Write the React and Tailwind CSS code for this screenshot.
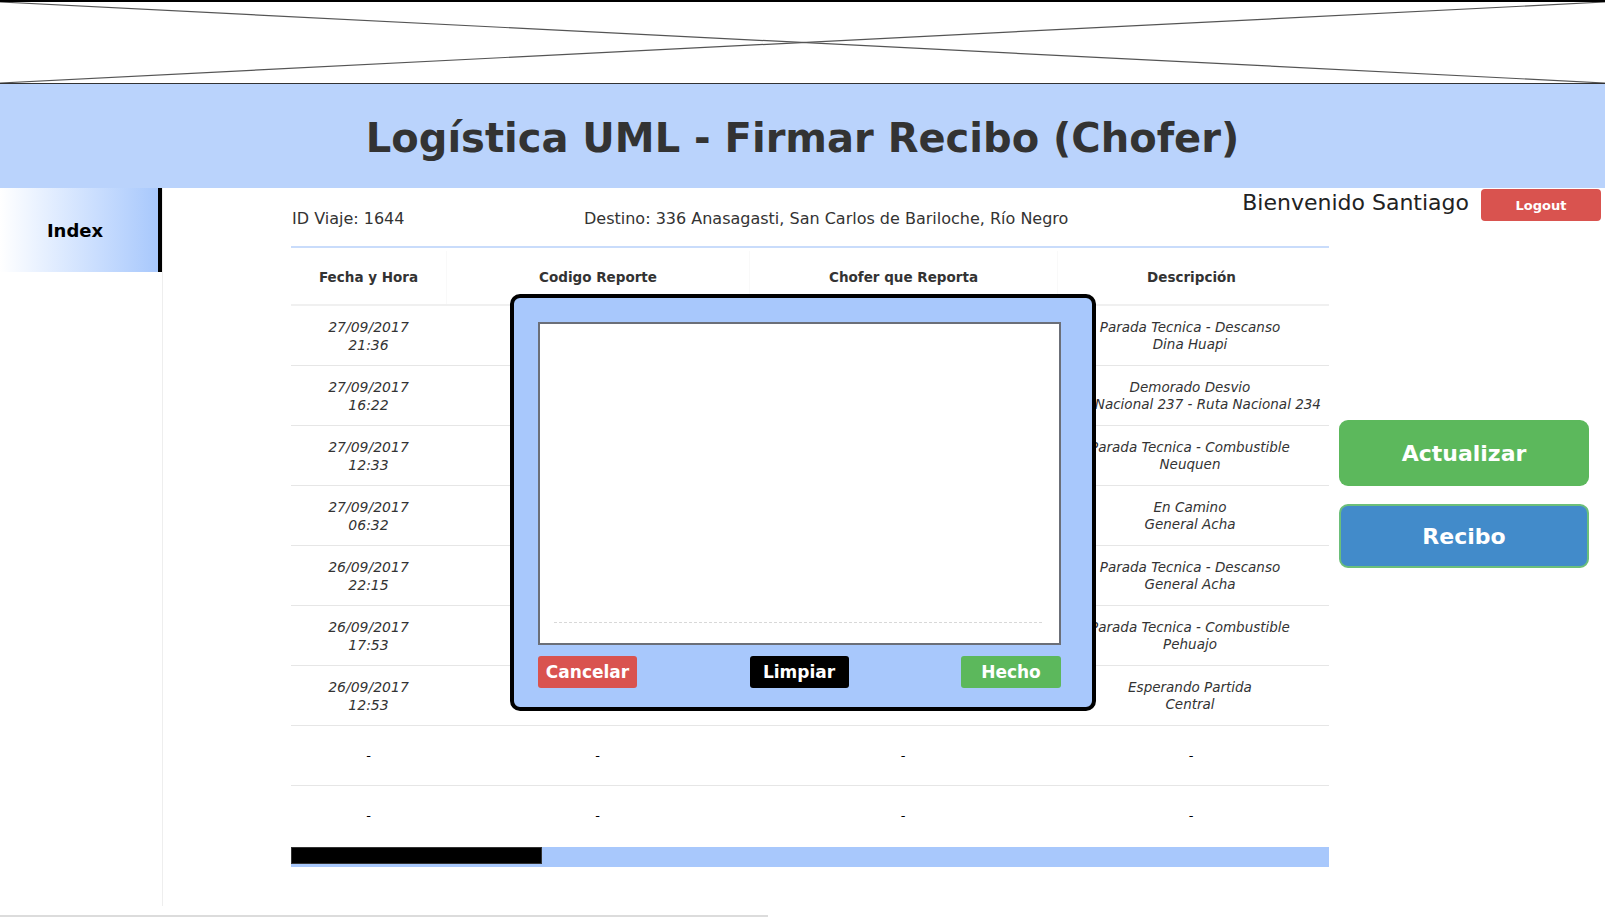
import React from "react";

const rows = [
  ["27/09/2017", "21:36", "Parada Tecnica - Descanso", "Dina Huapi"],
  ["27/09/2017", "16:22", "Demorado Desvio", "Ruta Nacional 237 - Ruta Nacional 234"],
  ["27/09/2017", "12:33", "Parada Tecnica - Combustible", "Neuquen"],
  ["27/09/2017", "06:32", "En Camino", "General Acha"],
  ["26/09/2017", "22:15", "Parada Tecnica - Descanso", "General Acha"],
  ["26/09/2017", "17:53", "Parada Tecnica - Combustible", "Pehuajo"],
  ["26/09/2017", "12:53", "Esperando Partida", "Central"],
];

const font = { fontFamily: '"DejaVu Sans", Verdana, sans-serif' };

export default function App() {
  return (
    <div className="relative w-[1605px] h-[917px] overflow-hidden bg-white text-[#333]" style={font}>
      {/* image placeholder */}
      <div className="h-[84px] border-t-2 border-b border-t-black border-b-[#333] relative">
        <svg className="w-full h-full block" viewBox="0 0 1605 81" preserveAspectRatio="none">
          <line x1="0" y1="0" x2="1605" y2="81" stroke="#555" strokeWidth="1.2" />
          <line x1="0" y1="81" x2="1605" y2="0" stroke="#555" strokeWidth="1.2" />
        </svg>
      </div>

      {/* header */}
      <div className="h-[104px] bg-[#bad3fc] flex items-center justify-center pt-[4px]">
        <h1 className="text-[40px] font-bold leading-none text-[#333] tracking-normal">
          Logística UML - Firmar Recibo (Chofer)
        </h1>
      </div>

      {/* body */}
      <div className="flex h-[718px]">
        <aside className="w-[163px] border-r border-[#eeeeee] shrink-0">
          <div className="w-[162px] h-[84px] border-r-4 border-black bg-gradient-to-r from-white to-[#a8c8fc] flex items-center justify-center pr-2 pt-[1px]">
            <span className="text-[18px] font-bold text-black">Index</span>
          </div>
        </aside>

        <main className="flex-1 flex flex-col">
          {/* top info row */}
          <div className="h-[58px] flex items-start">
            <div className="pl-[129px] w-[421px] pt-[21px] text-[16px] leading-5 text-[#333]">ID Viaje: 1644</div>
            <div className="pt-[21px] text-[16px] leading-5 text-[#333]">
              Destino: 336 Anasagasti, San Carlos de Bariloche, Río Negro
            </div>
            <div className="ml-auto flex items-start pr-[4px]">
              <span className="text-[22px] leading-[26px] mt-[2px] text-[#222] mr-[12px]">Bienvenido Santiago</span>
              <button className="w-[120px] h-[32px] mt-[1px] rounded-[4px] bg-[#d9534f] text-white text-[13px] font-bold pt-[2px]">
                Logout
              </button>
            </div>
          </div>

          <div className="flex">
            {/* table */}
            <div className="ml-[128px] w-[1038px]">
              <div className="border-t-2 border-[#c9dcfb]">
                <div className="flex h-[58px] border-b-2 border-[#f0f0f0] text-[13.5px] font-bold text-[#333] items-center pt-[3px]">
                  <div className="w-[155px] text-center">Fecha y Hora</div>
                  <div className="w-[303px] h-full flex items-center justify-center border-l border-[#f9f9f9]">Codigo Reporte</div>
                  <div className="w-[308px] h-full flex items-center justify-center border-l border-[#f9f9f9]">Chofer que Reporta</div>
                  <div className="w-[272px] h-full flex items-center justify-center border-l border-[#f9f9f9] pr-[4px]">Descripción</div>
                </div>
                {rows.map((r, i) => (
                  <div key={i} className="flex h-[60px] border-b border-[#e6e6e6] items-center italic text-[#333]">
                    <div className="w-[155px] text-center text-[14px] leading-[18px]">
                      <div>{r[0]}</div>
                      <div>{r[1]}</div>
                    </div>
                    <div className="w-[303px]" />
                    <div className="w-[308px]" />
                    <div className="w-[272px] flex flex-col items-center whitespace-nowrap text-[13.5px] leading-[17px] pr-[6px]">
                      <div>{r[2]}</div>
                      <div>{r[3]}</div>
                    </div>
                  </div>
                ))}
                {[0, 1].map((i) => (
                  <div key={"d" + i} className={`flex h-[60px] items-center text-[13px] text-black ${i === 0 ? "border-b border-[#e6e6e6]" : ""}`}>
                    <div className="w-[155px] text-center">-</div>
                    <div className="w-[303px] text-center">-</div>
                    <div className="w-[308px] text-center">-</div>
                    <div className="w-[272px] text-center pr-[4px]">-</div>
                  </div>
                ))}
              </div>
              {/* scrollbar */}
              <div className="h-[20px] bg-[#a8c8fc] mt-[1px] flex items-start">
                <div className="w-[251px] h-[17px] bg-black border border-[#333]" />
              </div>
            </div>

            {/* action buttons */}
            <div className="ml-[10px] w-[250px] pt-[174px] flex flex-col gap-[18px]">
              <button className="h-[66px] rounded-[9px] bg-[#5cb85c] text-white text-[22px] font-bold">
                Actualizar
              </button>
              <button className="h-[64px] rounded-[9px] bg-[#428bca] border-2 border-[#6cbf7a] text-white text-[22px] font-bold">
                Recibo
              </button>
            </div>
          </div>
        </main>
      </div>

      {/* bottom scrollbar line */}
      <div className="absolute left-0 bottom-0 w-[768px] h-[2px] bg-[#dcdcdc]" />

      {/* signature modal */}
      <div className="absolute left-[510px] top-[294px] w-[586px] h-[417px] border-4 border-black rounded-[10px] bg-[#a8c8fc] pl-[24px] pt-[24px]">
        <div className="relative w-[523px] h-[323px] bg-white border-2 border-[#6b6f78]">
          <div className="absolute left-[14px] right-[17px] top-[298px] border-t border-dashed border-[#d8d8d8]" />
        </div>
        <div className="w-[523px] mt-[11px] flex justify-between items-center">
          <button className="w-[99px] h-[32px] rounded-[3px] bg-[#d9534f] text-white text-[17px] font-bold pt-[1px]">Cancelar</button>
          <button className="w-[99px] h-[32px] rounded-[3px] bg-black text-white text-[17px] font-bold pt-[1px]">Limpiar</button>
          <button className="w-[100px] h-[32px] rounded-[3px] bg-[#5cb85c] text-white text-[17px] font-bold pt-[1px]">Hecho</button>
        </div>
      </div>
    </div>
  );
}
